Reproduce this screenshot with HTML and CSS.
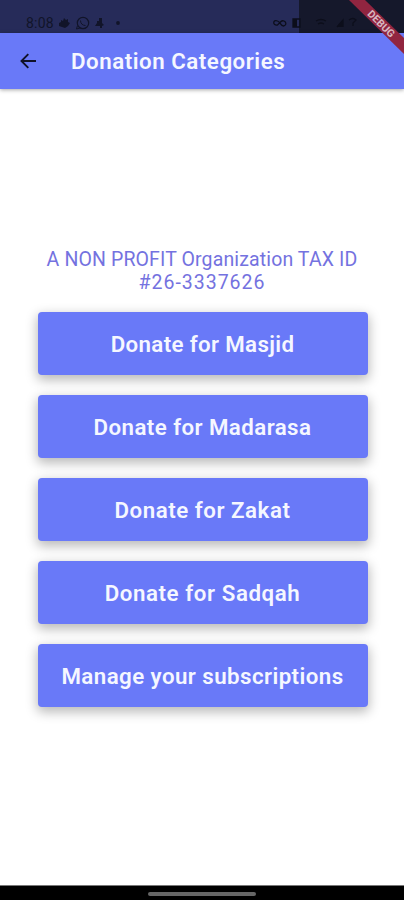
FILE: index.html
```
<!DOCTYPE html>
<html lang="en">
<head>
<meta charset="utf-8">
<title>Donation Categories</title>
<link rel="stylesheet" href="styles.css">
</head>
<body>
<div class="screen">
  <div class="status">
    <span class="clock">8:08</span>
    <svg class="status-left" width="70" height="16" viewBox="0 0 70 16">
      <path d="M2 8l2-1V5l2 1 1-3 2 2 2-1 0 3 2 1-2 3-3 2-3-1-3-1z" fill="currentColor"/>
      <circle cx="26" cy="8" r="5.700" fill="none" stroke="currentColor" stroke-width="1.200"/>
      <path d="M20.500 10.500l-1 3.500 3.500-1M23.500 5.500c0 3 2 5 5 5" fill="none" stroke="currentColor"/>
      <path d="M42 3h3v5l2 2-2 1v2h-2v-2h-5l2-3v-2h2z" fill="currentColor"/>
      <circle cx="61" cy="8" r="1.900" fill="currentColor"/>
    </svg>
    <div class="shade">
      <svg width="132" height="33" viewBox="0 0 132 33">
        <g fill="none" stroke="#0c0e1b" stroke-width="1.300">
          <path d="M5.500 21c-5-2-5 5 0 4l3-3c4-4 8 3 3 4-3 0-3-4-6-5z"/>
          <path d="M21 19h7v8h-7zM44 21q5-3 10 0M46 24q3-2 6 0M65 27l6-7v7M77 20q4-3 7 0l-3 3v3"/>
        </g>
        <path d="M21 19h4v8h-4zM65 27l6-7v7zM107 20h3v7h-3z" fill="#0c0e1b"/>
      </svg>
    </div>
  </div>
  <header class="bar">
    <svg class="back" width="18" height="18" viewBox="0 0 18 18"><path d="M16 9H2M8.300 2.200L1.500 9l6.800 6.800" fill="none" stroke="#10122a" stroke-width="1.900"/></svg>
    <h1>Donation Categories</h1>
  </header>
  <main>
    <p class="tax"><span class="tax-name">A NON PROFIT Organization TAX ID</span><br><span class="tax-id">#26-3337626</span></p>
    <div class="options">
      <button><span class="masjid">Donate for Masjid</span></button>
      <button><span class="madarasa">Donate for Madarasa</span></button>
      <button><span class="zakat">Donate for Zakat</span></button>
      <button><span class="sadqah">Donate for Sadqah</span></button>
      <button><span class="manage">Manage your subscriptions</span></button>
    </div>
  </main>
  <footer><div class="handle"></div></footer>
  <svg class="ribbon" width="60" height="60" viewBox="0 0 60 60">
    <path d="M5 0H21L60 38V54Z" fill="#912540"/>
    <text x="37.500" y="23.500" transform="rotate(45 37.500 23.500)" text-anchor="middle" dy="4">DEBUG</text>
  </svg>
</div>
</body>
</html>
```
FILE: styles.css
```
* { box-sizing: border-box; }
body { margin: 0; font-family: Roboto, sans-serif; background: #fff; }
.screen { position: relative; width: 404px; height: 900px; display: flex; flex-direction: column; overflow: hidden; }
.status { height: 33px; flex: none; background: #262b59; display: flex; color: #111429; }
.clock { padding: 15px 0 0 26px; width: 57px; font-size: 14px; line-height: 17px; letter-spacing: .2px; white-space: nowrap; }
.status-left { margin-top: 15px; }
.shade { margin-left: auto; width: 132px; height: 33px; background: linear-gradient(90deg, transparent 27px, #15182b 27px); }
.bar { height: 56px; flex: none; background: #6979f8; display: flex; align-items: center; padding-left: 20px; box-shadow: 0 1px 4px rgba(0,0,0,.35); }
.back { flex: none; }
h1 { margin: 0 0 0 33px; font-size: 22.3px; line-height: 26px; font-weight: 600; color: #f5f7ff; letter-spacing: .53px; white-space: nowrap; }
main { flex: 1; display: flex; flex-direction: column; align-items: center; padding-top: 159px; }
.tax { margin: 0 0 18px; text-align: center; font-size: 19.5px; line-height: 23px; color: #7472e0; white-space: nowrap; }
.tax-name { letter-spacing: .13px; }
.tax-id { letter-spacing: 1px; }
.options { display: flex; flex-direction: column; gap: 20px; width: 330px; margin-left: 1px; }
button { height: 63px; border: 0; border-radius: 4px; padding: 0; background: #6979f8; color: #f5f7ff; font: 600 22.3px/26px Roboto, sans-serif; box-shadow: 0 4px 12px 1px rgba(0,0,0,.28); white-space: nowrap; }
.masjid { letter-spacing: .35px; }
.madarasa { letter-spacing: .42px; }
.zakat { letter-spacing: .53px; }
.sadqah { letter-spacing: .58px; }
.manage { letter-spacing: .43px; }
footer { height: 15px; flex: none; background: #000; border-top: 1px solid #777; display: flex; justify-content: center; padding-top: 6px; }
.handle { width: 108px; height: 4px; border-radius: 2px; background: #666; }
.ribbon { position: absolute; top: 0; right: 0; }
.ribbon text { font: 700 10.5px Roboto, sans-serif; fill: #d8b7c1; }
```
